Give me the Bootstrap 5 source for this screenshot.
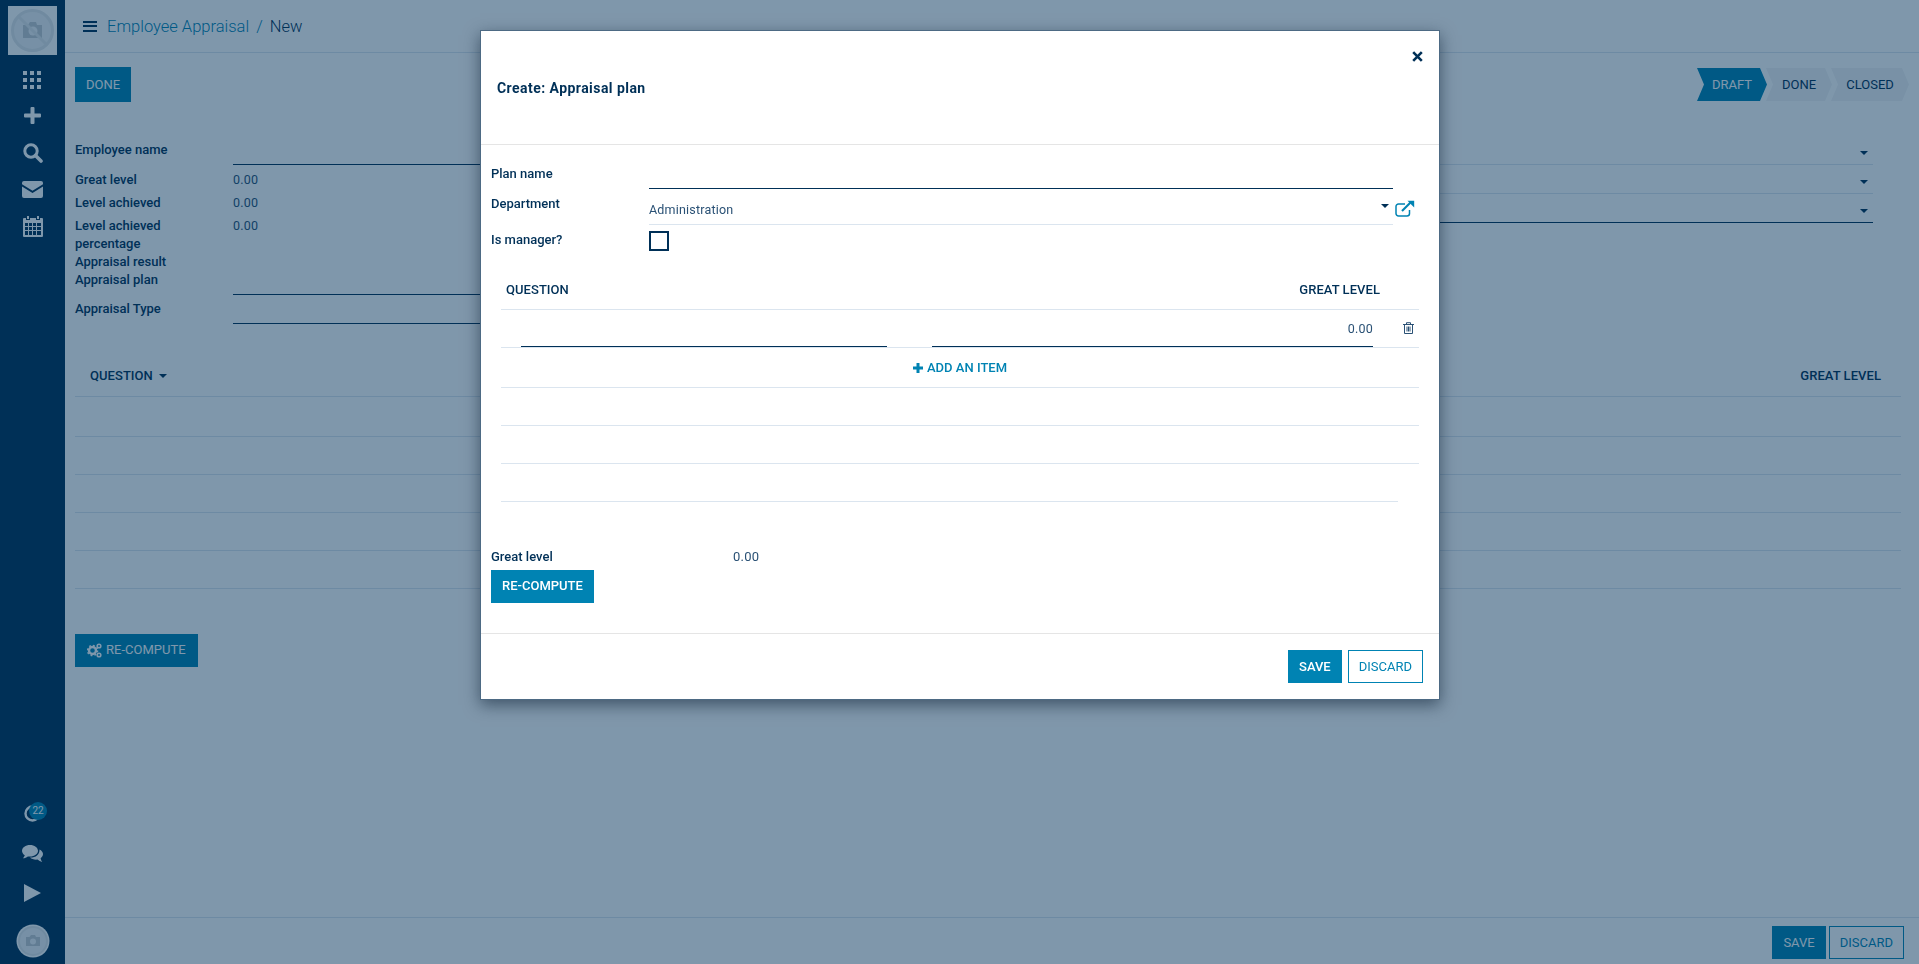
<!DOCTYPE html>
<html lang="en">
<head>
    <meta charset="UTF-8">
    <meta name="viewport" content="width=device-width, initial-scale=1.0">
    <title>Employee Appraisal</title>
    <link href="https://cdn.jsdelivr.net/npm/bootstrap@5.3.0/dist/css/bootstrap.min.css" rel="stylesheet">
    <style>
        html, body { height: 100%; }
        body {
            font-family: Roboto, "Liberation Sans", sans-serif;
            font-size: 13px;
            line-height: 18px;
            color: #003057;
            background: #fff;
            overflow: hidden;
        }
        #appShell { height: 964px; }

        /* sidebar */
        #sideBar { width: 65px; background: #003057; padding-top: 6px; }
        .logo-box { width: 49px; height: 49px; background: #fff; margin-bottom: 9px; }
        .side-icon { height: 37px; width: 100%; fill: #fff; position: relative; }
        .side-icon.first-icon { height: 33px; }
        .side-icon.clock-icon { margin-bottom: 1px; }
        .side-icon.chat-icon { height: 41px; }
        .side-icon svg { display: block; }
        .side-badge {
            position: absolute; top: 7px; left: 29px;
            width: 18px; height: 18px; border-radius: 50%;
            background: #0083b3; color: #fff;
            font-size: 10px; line-height: 18px; text-align: center;
        }
        .side-avatar { width: 34px; height: 34px; margin: 13px 0 6px; }

        /* top part */
        #topBar { height: 53px; border-bottom: 1px solid #dbe5ef; padding-left: 18px; }
        .crumb-text { font-size: 16.5px; line-height: 20px; font-weight: 300; padding-top: 2px; }
        .crumb-link { color: #0083b3; }
        .crumb-gap { margin-left: 7px; }
        .burger { width: 14px; height: 11px; border-top: 2px solid #003057; border-bottom: 2px solid #003057; position: relative; margin-right: 10px; }
        .burger::after { content: ""; position: absolute; left: 0; right: 0; top: 2.5px; height: 2px; background: #003057; }

        .app-btn {
            border-radius: 0; font-size: 13px; line-height: 18px; font-weight: 400;
            padding: 6.5px 10px; border: 1px solid #0083b3;
            background: #0083b3; color: #fff; text-transform: uppercase;
        }
        .app-btn.btn-ghost { background: #fff; color: #0083b3; }
        .app-btn.btn-strong { font-weight: 500; }
        .btn-tall { padding: 7.5px 10px; }

        #actionRow { padding: 14px 10px 0; height: 83px; }
        .step-item {
            height: 33px; line-height: 33px; text-align: center; font-size: 13px; background: #f2f3f5;
            clip-path: polygon(0 0, calc(100% - 7px) 0, 100% 50%, calc(100% - 7px) 100%, 0 100%, 7px 50%);
        }
        .step-draft { width: 70px; background: #0083b3; color: #fff; }
        .step-done { width: 66px; margin-left: -1px; }
        .step-closed { width: 78px; margin-left: -1px; }
        #stepBar { margin-top: 1px; }

        /* main form */
        #mainForm { padding: 0 46px 0 10px; }
        .form-side-l { flex: 0 0 900px; }
        .form-side-r { flex: 1 1 auto; margin-left: 50px; }
        .field-row { display: flex; }
        .field-label { flex: 0 0 158px; font-weight: 500; }
        .line-field { flex: 1 1 auto; height: 29px; border-bottom: 1px solid #003057; }
        .line-field.line-soft { border-bottom-color: #dbe5ef; }
        .line-field.line-short { height: 24px; }
        .line-field.line-drop { padding-top: 6px; }
        .pad-4 { padding-top: 4px; }
        .pad-5 { padding-top: 5px; }
        .pad-6 { padding-top: 6px; }
        .ht-23 { height: 23px; }
        .first-value { margin-top: 2px; }
        .caret-end {
            width: 0; height: 0; margin: 0 5px 0 auto;
            border-left: 4px solid transparent; border-right: 4px solid transparent; border-top: 4px solid #003057;
        }

        .plain-table { --bs-table-bg: transparent; --bs-table-color: #003057; --bs-table-border-color: #dbe5ef; table-layout: fixed; margin: 0; }
        .plain-table > :not(caption) > * > * { padding: 0; }
        .plain-table th { font-weight: 500; text-transform: uppercase; vertical-align: middle; letter-spacing: .05px; }
        #pageGrid { margin: 32px 18px 0 10px; width: calc(100% - 28px); }
        #pageGrid thead tr { height: 40px; }
        #pageGrid th { padding: 0 15px; }
        #pageGrid th.th-end { padding-right: 20px; text-align: right; }
        #pageGrid tbody tr { height: 38px; }
        #pageGrid tbody tr:first-child { height: 40px; }
        .head-caret {
            display: inline-block; vertical-align: middle; margin-left: 6px;
            border-left: 4px solid transparent; border-right: 4px solid transparent; border-top: 4px solid #003057;
        }

        #recomputeBtn { margin: 45px 0 0 10px; padding: 6.5px 11px; }
        #pageFooter { border-top: 1px solid #dbe5ef; height: 47px; padding: 8px 15px 0 0; gap: 3px; }

        /* dialog */
        .modal-backdrop.show { --bs-backdrop-bg: #003057; --bs-backdrop-opacity: .5; background: #003057; opacity: .5; }
        .plan-dialog.modal-dialog { max-width: 960px; margin: 30px auto 0 480px; }
        .plan-content { border-radius: 0; border: 1px solid #4d6a84; box-shadow: 0 5px 15px rgba(0, 20, 40, .5); height: 670px; }
        .plan-header { display: block; height: 114px; padding: 20px 16px 0; border-bottom: 1px solid #e5e5e5; border-radius: 0; }
        .plan-title { font-size: 14px; line-height: 18px; font-weight: 700; margin: 17px 0 0 0; color: #003057; letter-spacing: .45px; }
        .close-x { background: none; border: 0; padding: 0; display: block; margin-left: auto; }
        .plan-body { padding: 15px 0 0 10px; height: 488px; flex: none; }
        .plan-footer { border-top: 1px solid #e5e5e5; padding: 16px 16px 0 0; gap: 6px; border-radius: 0; align-items: flex-start; }
        .plan-footer > * { margin: 0; }
        .value-text { letter-spacing: .2px; color: #2a5175; font-size: 12.5px; }
        .dept-field { flex: 0 0 744px; height: 36px; border-bottom: 1px solid #dbe5ef; padding-top: 6px; }
        .dept-field .caret-end { align-self: flex-start; margin-top: 9px; margin-right: 4px; }
        .ext-icon { margin: 11px 0 0 2px; }
        .name-field { flex: 0 0 744px; height: 29px; border-bottom: 1px solid #003057; }
        .check-box { width: 20px; height: 20px; border: 2px solid #003057; margin-top: 6px; }

        #lineGrid { width: 918px; margin: 20px 0 0 10px; }
        #lineGrid thead tr { height: 38px; }
        #lineGrid th { padding: 0; }
        .th-question { padding-left: 5px !important; }
        .th-level { padding-right: 18px !important; text-align: right; }
        #lineGrid .row-edit { height: 38px; }
        #lineGrid .row-add { height: 40px; }
        #lineGrid .row-empty { height: 38px; }
        #lineGrid td { vertical-align: bottom; }
        #lineGrid .row-add td { vertical-align: middle; text-align: center; color: #0083b3; font-weight: 500; text-transform: uppercase; padding-top: 1px; }
        .cell-q { padding: 0 25px 0 20px !important; }
        .cell-l { padding: 0 25px 0 20px !important; }
        .grid-input { height: 29px; border-bottom: 1px solid #003057; line-height: 22px; text-align: right; color: #2a5175; letter-spacing: .2px; font-size: 12.5px; }
        .no-line { border-bottom: 0 !important; }
        .trash-wrap { display: block; margin: 0 0 13px 5px; }
        .foot-level { margin-top: 46px; }
        .foot-label { flex: 0 0 161px; font-weight: 500; }
        .foot-value { letter-spacing: .2px; color: #2a5175; padding-left: 81px; }
        .btn-recalc { padding: 6.5px 10px; margin-top: 4px; display: block; }
    </style>
</head>
<body>
    <div id="appShell" class="d-flex">
        <div id="sideBar" class="d-flex flex-column align-items-center flex-shrink-0">
            <div class="logo-box d-flex align-items-center justify-content-center">
                <svg width="45" height="45" viewBox="0 0 45 45">
                    <circle cx="22.5" cy="22.5" r="20" fill="#eef1f4" stroke="#e0e4e8" stroke-width="3"/>
                    <path d="M13 17h5l2-3h6l1 3h5v13H13z" fill="#c2c8cf"/>
                    <circle cx="23" cy="23" r="4.5" fill="#eef1f4"/>
                    <path d="M9 9l27 27" stroke="#e0e4e8" stroke-width="3"/>
                </svg>
            </div>
            <div class="side-icon first-icon d-flex align-items-center justify-content-center">
                <svg width="19" height="19" viewBox="0 0 19 19"><rect x="0" y="0" width="4" height="4"/><rect x="7" y="0" width="4" height="4"/><rect x="14" y="0" width="4" height="4"/><rect x="0" y="7" width="4" height="4"/><rect x="7" y="7" width="4" height="4"/><rect x="14" y="7" width="4" height="4"/><rect x="0" y="14" width="4" height="4"/><rect x="7" y="14" width="4" height="4"/><rect x="14" y="14" width="4" height="4"/></svg>
            </div>
            <div class="side-icon d-flex align-items-center justify-content-center">
                <svg width="17" height="17" viewBox="0 0 17 17"><path d="M6.5 1a1 1 0 0 1 1-1h2a1 1 0 0 1 1 1v5.500h5.500a1 1 0 0 1 1 1v2a1 1 0 0 1-1 1h-5.500v5.500a1 1 0 0 1-1 1h-2a1 1 0 0 1-1-1v-5.500h-5.500a1 1 0 0 1-1-1v-2a1 1 0 0 1 1-1h5.500z"/></svg>
            </div>
            <div class="side-icon d-flex align-items-center justify-content-center">
                <svg width="20" height="20" viewBox="0 0 20 20"><circle cx="8" cy="8" r="6.200" fill="none" stroke="#fff" stroke-width="3"/><path d="M12.500 12.500l5.500 5.500" stroke="#fff" stroke-width="3.600" stroke-linecap="round"/></svg>
            </div>
            <div class="side-icon d-flex align-items-center justify-content-center">
                <svg width="21" height="17" viewBox="0 0 21 17"><path d="M2 0h17a2 2 0 0 1 2 2v1.300l-10.500 6.500L0 3.300V2a2 2 0 0 1 2-2z"/><path d="M0 5.600l10.500 6.500 10.500-6.500V15a2 2 0 0 1-2 2H2a2 2 0 0 1-2-2z"/></svg>
            </div>
            <div class="side-icon d-flex align-items-center justify-content-center">
                <svg width="20" height="21" viewBox="0 0 20 21"><path fill-rule="evenodd" d="M4 0h2v3H4zM14 0h2v3h-2zM1 2h2v2h4V2h6v2h4V2h2a1 1 0 0 1 1 1v17a1 1 0 0 1-1 1H1a1 1 0 0 1-1-1V3a1 1 0 0 1 1-1zM2 7v3h3V7zm4 0v3h3V7zm4 0v3h3V7zm4 0v3h4V7zM2 11v3h3v-3zm4 0v3h3v-3zm4 0v3h3v-3zm4 0v3h4v-3zM2 15v4h3v-4zm4 0v4h3v-4zm4 0v4h3v-4zm4 0v4h4v-4z"/></svg>
            </div>
            <div class="mt-auto w-100 d-flex flex-column align-items-center">
                <div class="side-icon clock-icon d-flex align-items-center justify-content-center">
                    <svg width="17" height="17" viewBox="0 0 17 17"><circle cx="8.500" cy="8.500" r="7" fill="none" stroke="#fff" stroke-width="2.400"/></svg>
                    <span class="side-badge">22</span>
                </div>
                <div class="side-icon chat-icon d-flex align-items-center justify-content-center">
                    <svg width="21" height="18" viewBox="0 0 21 18"><path d="M8 0c4.400 0 8 2.600 8 5.800s-3.600 5.800-8 5.800c-.8 0-1.500-.1-2.200-.2C4.500 12.500 2.800 13 1 13.300c.8-.9 1.500-1.900 1.800-3C1.100 9.300 0 7.700 0 5.800 0 2.600 3.600 0 8 0z"/><path d="M17.500 4.500c2 1 3.500 2.700 3.500 4.600 0 1.700-.9 3.100-2.400 4.100.2 1.300.8 2.800 1.600 3.900-1.800-.5-3.400-1.300-4.700-2.500-3 .3-5.800-.4-7.500-2 5.500.2 9.700-2.800 9.500-8.100z"/></svg>
                </div>
                <div class="side-icon d-flex align-items-center justify-content-center">
                    <svg width="17" height="18" viewBox="0 0 17 18"><path d="M0 0l17 9-17 9z"/></svg>
                </div>
                <svg class="side-avatar" viewBox="0 0 34 34">
                    <circle cx="17" cy="17" r="16.500" fill="#fff"/>
                    <circle cx="17" cy="17" r="14" fill="#eef1f4" stroke="#e0e4e8" stroke-width="2"/>
                    <path d="M10 13h3.500l1.500-2h4l1 2h4v9H10z" fill="#c2c8cf"/>
                    <circle cx="17" cy="17.500" r="3" fill="#eef1f4"/>
                </svg>
            </div>
        </div>

        <div class="flex-grow-1 d-flex flex-column min-w-0">
            <div id="topBar" class="d-flex align-items-center">
                <span class="burger"></span>
                <span class="crumb-text crumb-link">Employee Appraisal</span>
                <span class="crumb-text crumb-link crumb-gap">/</span>
                <span class="crumb-text crumb-gap">New</span>
            </div>

            <div id="actionRow" class="d-flex justify-content-between align-items-start">
                <button class="btn app-btn btn-tall">Done</button>
                <div id="stepBar" class="d-flex">
                    <div class="step-item step-draft">DRAFT</div>
                    <div class="step-item step-done">DONE</div>
                    <div class="step-item step-closed">CLOSED</div>
                </div>
            </div>

            <div id="mainForm" class="d-flex">
                <div class="form-side-l">
                    <div class="field-row"><div class="field-label pad-5">Employee name</div><div class="line-field"></div></div>
                    <div class="field-row ht-23 first-value"><div class="field-label pad-4">Great level</div><div class="pad-4 value-text">0.00</div></div>
                    <div class="field-row ht-23"><div class="field-label pad-4">Level achieved</div><div class="pad-4 value-text">0.00</div></div>
                    <div class="field-row"><div class="field-label pad-4">Level achieved<br>percentage</div><div class="pad-4 value-text">0.00</div></div>
                    <div class="field-row"><div class="field-label">Appraisal result</div></div>
                    <div class="field-row"><div class="field-label">Appraisal plan</div><div class="line-field line-short"></div></div>
                    <div class="field-row"><div class="field-label pad-5">Appraisal Type</div><div class="line-field"></div></div>
                </div>
                <div class="form-side-r">
                    <div class="line-field line-soft line-drop d-flex align-items-center"><span class="caret-end"></span></div>
                    <div class="line-field line-soft line-drop d-flex align-items-center"><span class="caret-end"></span></div>
                    <div class="line-field line-drop d-flex align-items-center"><span class="caret-end"></span></div>
                </div>
            </div>

            <table id="pageGrid" class="table plain-table">
                <thead>
                    <tr><th>Question<span class="head-caret"></span></th><th class="th-end">Great level</th></tr>
                </thead>
                <tbody>
                    <tr><td colspan="2"></td></tr>
                    <tr><td colspan="2"></td></tr>
                    <tr><td colspan="2"></td></tr>
                    <tr><td colspan="2"></td></tr>
                    <tr><td colspan="2"></td></tr>
                </tbody>
            </table>

            <div>
                <button id="recomputeBtn" class="btn app-btn d-inline-flex align-items-center gap-1">
                    <svg width="15" height="15" viewBox="0 0 15 15" fill="none" stroke="#fff">
                        <circle cx="5.500" cy="7.500" r="3.500" stroke-width="2.400"/>
                        <circle cx="5.500" cy="7.500" r="5" stroke-width="1.600" stroke-dasharray="1.800 2.100"/>
                        <circle cx="12" cy="3" r="1.800" stroke-width="1.600"/>
                        <circle cx="12" cy="12" r="1.800" stroke-width="1.600"/>
                    </svg>
                    Re-compute
                </button>
            </div>

            <div id="pageFooter" class="mt-auto d-flex justify-content-end align-items-start">
                <button class="btn app-btn">Save</button>
                <button class="btn app-btn btn-ghost">Discard</button>
            </div>
        </div>
    </div>

    <div class="modal-backdrop show"></div>
    <div class="modal d-block" tabindex="-1">
        <div class="modal-dialog plan-dialog">
            <div class="modal-content plan-content">
                <div class="modal-header plan-header">
                    <button class="close-x" type="button" aria-label="Close">
                        <svg class="d-block" width="11" height="11" viewBox="0 0 11 11"><path d="M1.200 1.200l8.600 8.600M9.800 1.200l-8.600 8.600" stroke="#003057" stroke-width="2.600"/></svg>
                    </button>
                    <h5 class="plan-title">Create: Appraisal plan</h5>
                </div>
                <div class="modal-body plan-body">
                    <div class="field-row">
                        <div class="field-label pad-5">Plan name</div>
                        <div class="name-field"></div>
                    </div>
                    <div class="field-row">
                        <div class="field-label pad-6">Department</div>
                        <div class="dept-field d-flex align-items-center"><span class="value-text">Administration</span><span class="caret-end"></span></div>
                        <svg class="ext-icon" width="20" height="17" viewBox="0 0 20 17" fill="none" stroke="#0083b3" stroke-width="1.500">
                            <path d="M14.500 10v3.500a2.500 2.500 0 0 1-2.500 2.500H3.500A2.500 2.500 0 0 1 1 13.500V6.500A2.500 2.500 0 0 1 3.500 4H10"/>
                            <path d="M7 11l9-9" stroke-width="2.200"/>
                            <path d="M12.500 0.800h6.700v6.700z" fill="#0083b3" stroke="none"/>
                        </svg>
                    </div>
                    <div class="field-row">
                        <div class="field-label pad-6">Is manager?</div>
                        <div class="check-box"></div>
                    </div>

                    <table id="lineGrid" class="table plain-table">
                        <colgroup><col style="width:411px"><col style="width:486px"><col style="width:21px"></colgroup>
                        <thead>
                            <tr><th class="th-question">Question</th><th class="th-level">Great level</th><th></th></tr>
                        </thead>
                        <tbody>
                            <tr class="row-edit">
                                <td class="cell-q"><div class="grid-input"></div></td>
                                <td class="cell-l"><div class="grid-input">0.00</div></td>
                                <td>
                                    <svg class="trash-wrap" width="11" height="12" viewBox="0 0 11 12" fill="none" stroke="#2a5175">
                                        <path d="M0 2.500h11M3.500 2.500V.7h4v1.800M1.500 2.500v9h8v-9M4 4.500v5M5.500 4.500v5M7 4.500v5"/>
                                    </svg>
                                </td>
                            </tr>
                            <tr class="row-add">
                                <td colspan="3">
                                    <svg class="me-1" width="10" height="10" viewBox="0 0 10 10"><path d="M3.500 0h3v3.500H10v3H6.500V10h-3V6.500H0v-3h3.500z" fill="#0083b3"/></svg>Add an item
                                </td>
                            </tr>
                            <tr class="row-empty"><td></td><td></td><td></td></tr>
                            <tr class="row-empty"><td></td><td></td><td></td></tr>
                            <tr class="row-empty"><td></td><td></td><td class="no-line"></td></tr>
                        </tbody>
                    </table>

                    <div class="d-flex foot-level">
                        <div class="foot-label">Great level</div>
                        <div class="foot-value">0.00</div>
                    </div>
                    <button class="btn app-btn btn-strong btn-recalc">Re-compute</button>
                </div>
                <div class="modal-footer plan-footer">
                    <button class="btn app-btn btn-strong">Save</button>
                    <button class="btn app-btn btn-ghost">Discard</button>
                </div>
            </div>
        </div>
    </div>
</body>
</html>
